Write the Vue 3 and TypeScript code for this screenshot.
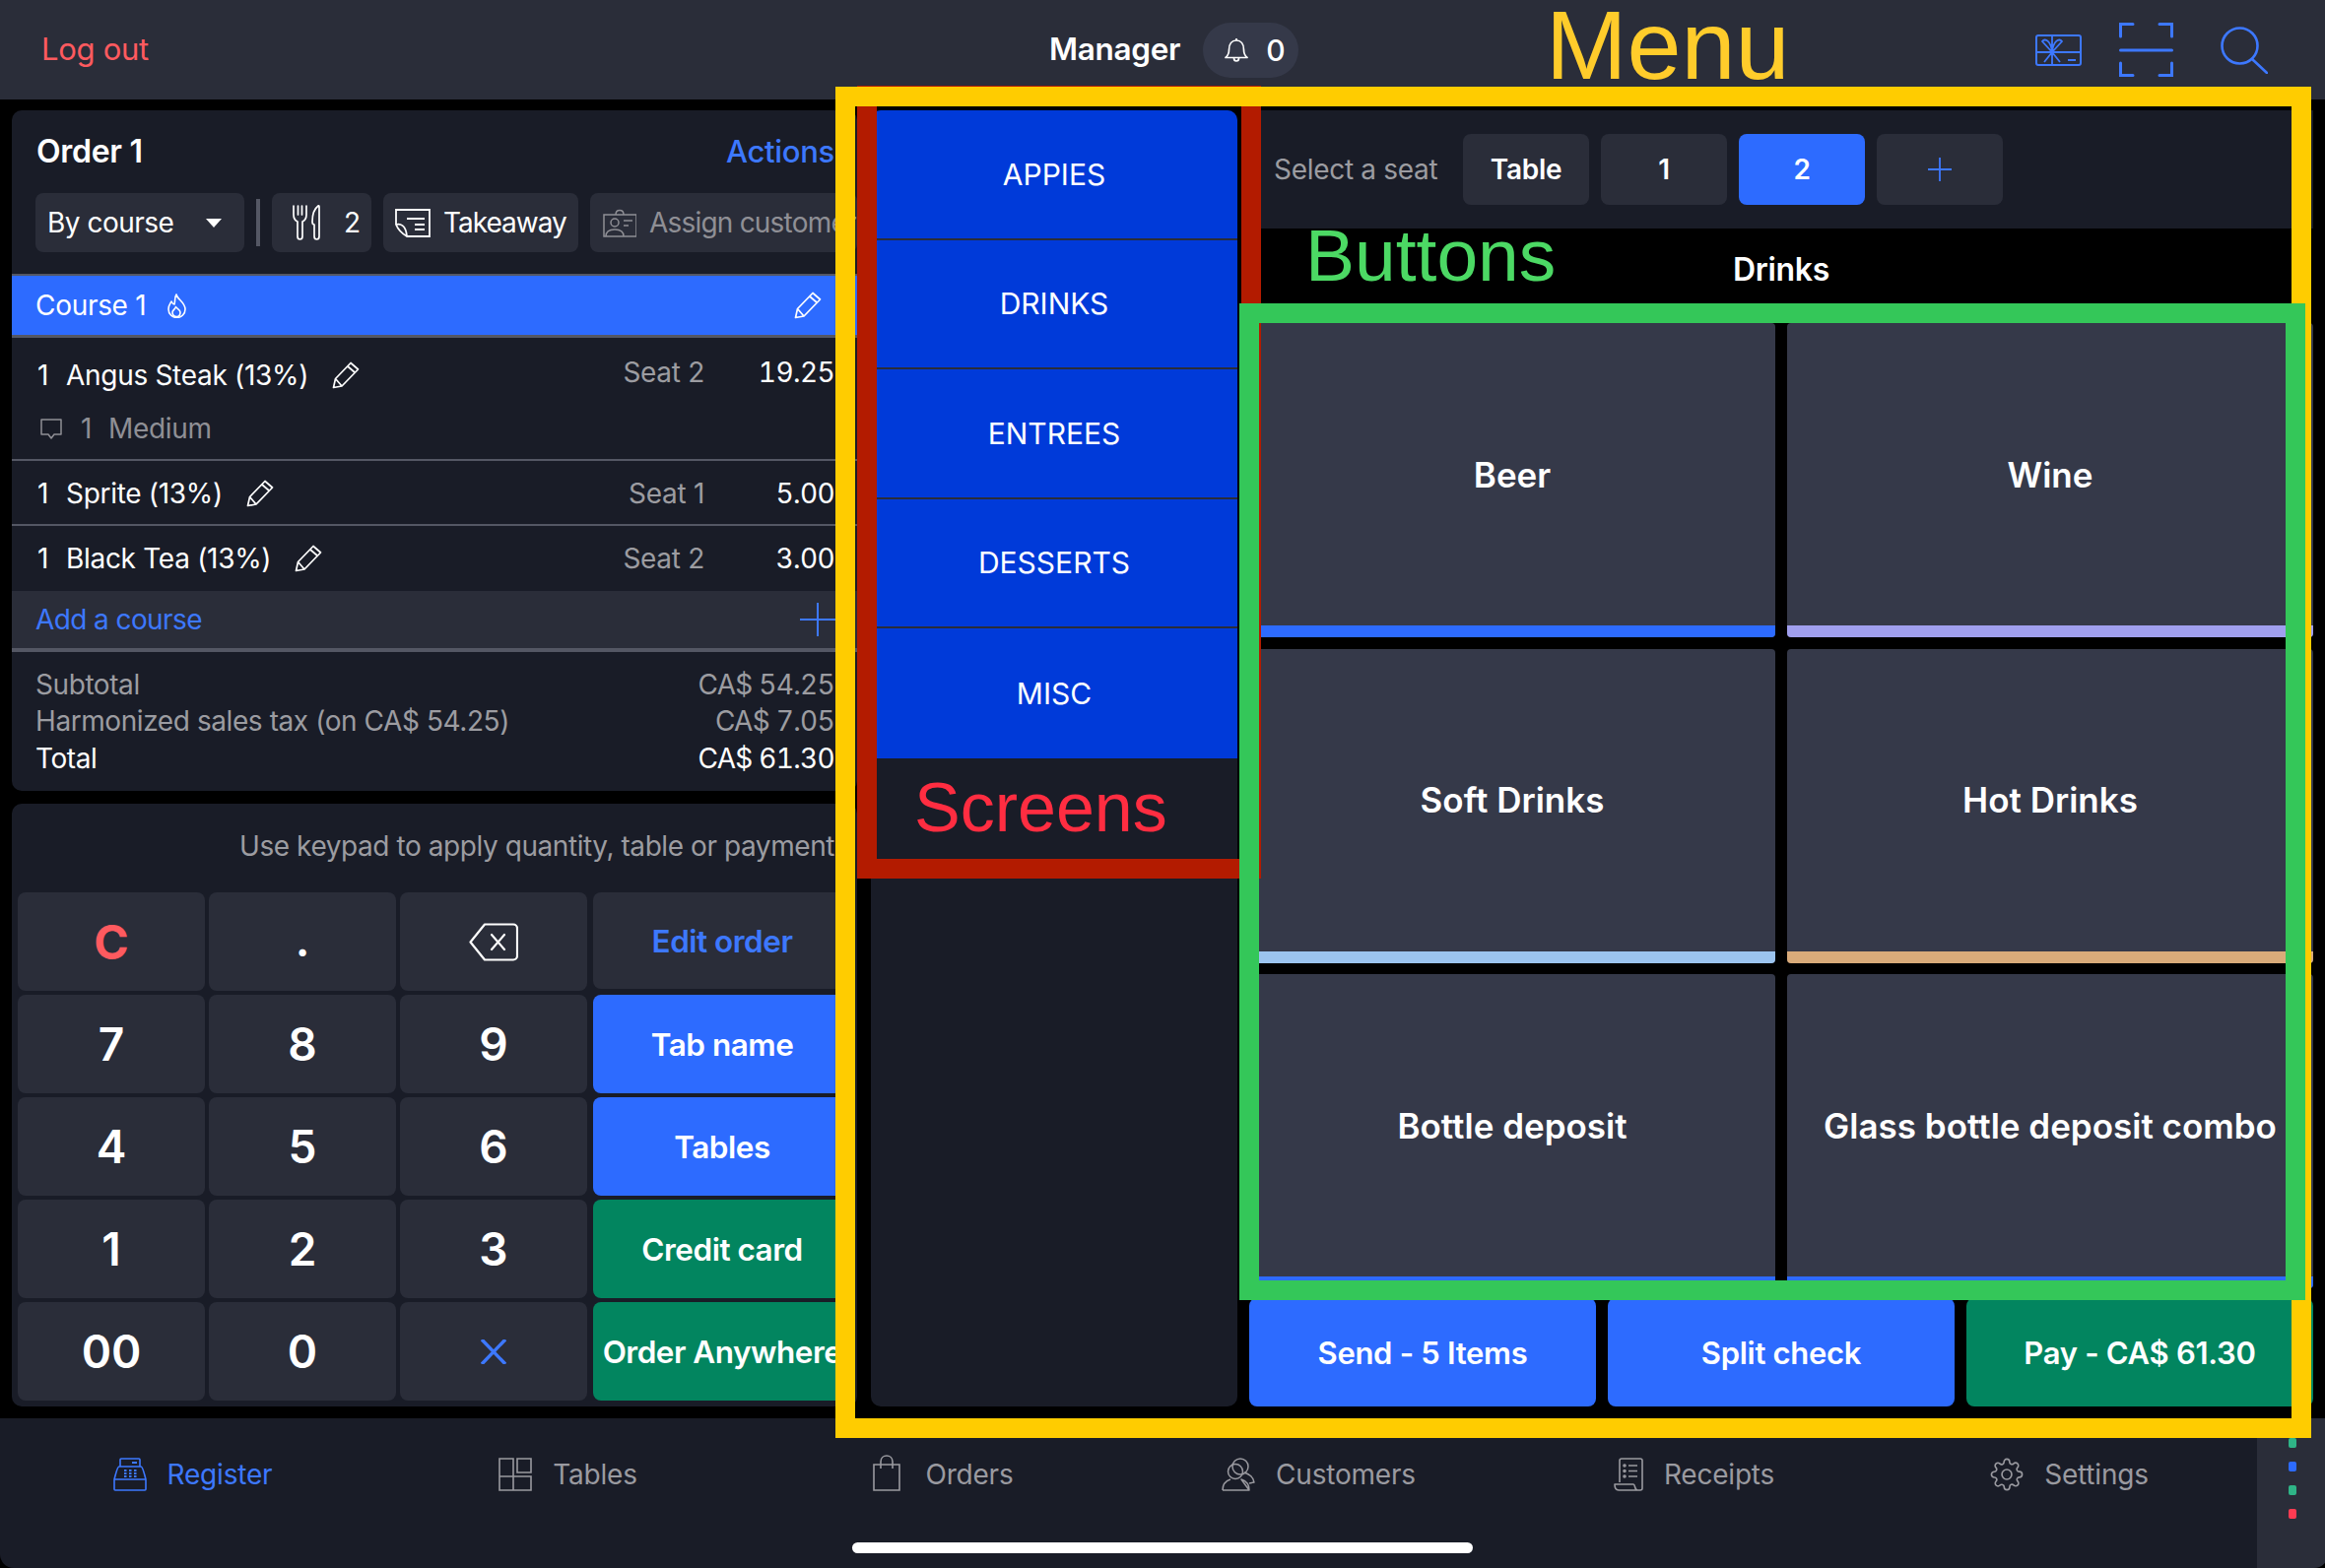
<script setup lang="ts">
interface OrderLine {
  name: string;
  seat: string;
  price: string;
  note?: string;
}

interface PadKey {
  label: string;
  kind?: string;
}

const orderLines: OrderLine[] = [
  { name: 'Angus Steak (13%)', seat: 'Seat 2', price: '19.25', note: 'Medium' },
  { name: 'Sprite (13%)', seat: 'Seat 1', price: '5.00' },
  { name: 'Black Tea (13%)', seat: 'Seat 2', price: '3.00' },
];

const totals = [
  { label: 'Subtotal', value: 'CA$ 54.25' },
  { label: 'Harmonized sales tax (on CA$ 54.25)', value: 'CA$ 7.05' },
  { label: 'Total', value: 'CA$ 61.30', strong: true },
];

const padKeys: PadKey[] = [
  { label: 'C', kind: 'clear' },
  { label: '.', kind: 'dot' },
  { label: '', kind: 'back' },
  { label: 'Edit order', kind: 'side ghost' },
  { label: '7' },
  { label: '8' },
  { label: '9' },
  { label: 'Tab name', kind: 'side blue' },
  { label: '4' },
  { label: '5' },
  { label: '6' },
  { label: 'Tables', kind: 'side blue' },
  { label: '1' },
  { label: '2' },
  { label: '3' },
  { label: 'Credit card', kind: 'side green' },
  { label: '00' },
  { label: '0' },
  { label: '', kind: 'times' },
  { label: 'Order Anywhere', kind: 'side green' },
];

const screens = ['APPIES', 'DRINKS', 'ENTREES', 'DESSERTS', 'MISC'];

const seats = [
  { label: 'Table' },
  { label: '1' },
  { label: '2', active: true },
];

const buttons = [
  { label: 'Beer', color: '#2d6bff' },
  { label: 'Wine', color: '#a09fee' },
  { label: 'Soft Drinks', color: '#9cc4ef' },
  { label: 'Hot Drinks', color: '#d9ab7a' },
  { label: 'Bottle deposit', color: '#2d6bff' },
  { label: 'Glass bottle deposit combo', color: '#2d6bff' },
];

const navItems = ['Register', 'Tables', 'Orders', 'Customers', 'Receipts', 'Settings'];

const statusDots = ['#2fb487', '#2d6bff', '#2fb487', '#ff3b52'];
</script>

<template>
  <div class="screen">
    <header class="topbar">
      <span class="logout">Log out</span>
      <div class="who">
        <span class="manager">Manager</span>
        <span class="bell-pill">
          <svg class="bell" viewBox="0 0 24 25" fill="none" stroke="#fff" stroke-width="1.7" stroke-linejoin="round">
            <path d="M1 20.500c2.500-2 3.500-4 3.500-8C4.500 6.500 7.500 3 12 3s7.500 3.500 7.500 9.500c0 4 1 6 3.500 8z" />
            <path d="M12 1v2M9.500 21c0 4 5 4 5 0" />
          </svg>
          0
        </span>
      </div>
      <div class="top-icons">
        <svg class="gift" viewBox="0 0 47 32" fill="none" stroke="#3d78ff" stroke-width="2">
          <rect x="1" y="1" width="45" height="30" rx="2" />
          <path d="M1 18h45M17 1v30M17 18L9 28M17 18l8 10M17 18L7 7c3-4 9 0 10 11zM17 18L27 7c-3-4-9 0-10 11zM33 26h8" stroke-width="1.800" />
        </svg>
        <svg class="scan" viewBox="0 0 55 55" fill="none" stroke="#3d78ff" stroke-width="3" stroke-linecap="round">
          <path d="M14 1.500H1.500V14M41 1.500h12.500V14M14 53.500H1.500V41M41 53.500h12.500V41M1.500 28h52" />
        </svg>
        <svg class="search" viewBox="0 0 48 48" fill="none" stroke="#3d78ff" stroke-width="2.600" stroke-linecap="round">
          <circle cx="19.500" cy="19.500" r="18" />
          <path d="M32 33l15 14" />
        </svg>
      </div>
    </header>

    <main class="body">
      <section class="left">
        <div class="order">
          <div class="order-head">
            <span class="order-title">Order 1</span>
            <span class="actions">Actions</span>
          </div>
          <div class="toolbar">
            <div class="chip by-course">
              <span>By course</span>
              <i class="caret"></i>
            </div>
            <i class="tool-sep"></i>
            <div class="chip covers">
              <svg class="fork" viewBox="0 0 30 36" fill="none" stroke="#fff" stroke-width="1.700" stroke-linecap="round" stroke-linejoin="round">
                <path d="M1 1v9c0 4 2 6 4 7v15c0 4 5 4 5 0V17c2-1 4-3 4-7V1M5.500 1v9M9.500 1v9" />
                <path d="M26 1c-4 3-6 9-6 16 0 2 1 3 2 3v12c0 4 5 4 5 0V2c0-1-.5-1.500-1-1z" />
              </svg>
              <span>2</span>
            </div>
            <div class="chip takeaway">
              <svg class="bill" viewBox="0 0 36 29" fill="none" stroke="#fff" stroke-width="1.800">
                <path d="M1 1h34v27H12C7 25 3 21 1 16zM1 16c4-1 10 0 11 12" />
                <path d="M12 10h18M20 16h10M20 21h10" stroke-width="2" />
              </svg>
              <span>Takeaway</span>
            </div>
            <div class="chip assign">
              <svg class="badge" viewBox="0 0 34 29" fill="none" stroke="#8f8f95" stroke-width="1.500">
                <path d="M1 6h33v22H1zM13 6c0-6 8-6 8 0" />
                <circle cx="12" cy="14" r="4" />
                <path d="M3 28c0-6 4-7 9-7s9 1 9 7M21 12h9M21 17h5" />
              </svg>
              <span>Assign customer</span>
            </div>
          </div>

          <div class="course-bar">
            <span>Course 1</span>
            <svg class="flame" viewBox="0 0 21 25" fill="none" stroke="#fff" stroke-width="1.600" stroke-linejoin="round">
              <path d="M10 1c1 5 9 8 9 15a8.500 8.500 0 0 1-17 0c0-4 2-6 3-8 1 2 2 3 3 3 1-3 0-7 2-10z" />
              <path d="M10.500 23.500c-3 0-4.500-2-4.500-4.500 0-2 3-3 3.500-5.500 1 2 4.500 3 4.500 5.500 0 2.500-1 4.500-3.500 4.500z" />
            </svg>
            <svg class="pencil course-pencil" viewBox="0 0 28 28" fill="none" stroke="#fff" stroke-width="1.700" stroke-linejoin="round">
              <path d="M1.500 26.500l2-9L19 1.500 26.500 8 10 25zM3.500 17.500l6.500 7.500M16 5l7.500 6.500" />
            </svg>
          </div>

          <div
            v-for="(line, i) in orderLines"
            :key="line.name"
            class="line"
            :class="{ 'line--note': line.note, 'line--last': i === orderLines.length - 1 }"
          >
            <div class="line-main">
              <span class="qty">1</span>
              <span class="name">{{ line.name }}</span>
              <svg class="pencil" viewBox="0 0 28 28" fill="none" stroke="#fff" stroke-width="1.700" stroke-linejoin="round">
                <path d="M1.500 26.500l2-9L19 1.500 26.500 8 10 25zM3.500 17.500l6.500 7.500M16 5l7.500 6.500" />
              </svg>
              <span class="seat">{{ line.seat }}</span>
              <span class="price">{{ line.price }}</span>
            </div>
            <div v-if="line.note" class="line-note">
              <svg class="comment" viewBox="0 0 22 21" fill="none" stroke="#8f8f95" stroke-width="1.500" stroke-linejoin="round">
                <path d="M1 1h20v15h-7l-3 4-3-4H1z" />
              </svg>
              <span class="note-qty">1</span>
              <span>{{ line.note }}</span>
            </div>
          </div>

          <div class="add-course">
            <span>Add a course</span>
            <svg class="add-plus" viewBox="0 0 36 34" stroke="#3d78ff" stroke-width="2">
              <path d="M18 0v34M0 17h36" />
            </svg>
          </div>

          <div class="totals">
            <div v-for="row in totals" :key="row.label" class="total-row" :class="{ strong: row.strong }">
              <span>{{ row.label }}</span>
              <span class="total-value">{{ row.value }}</span>
            </div>
          </div>
        </div>

        <div class="keypad">
          <p class="hint">Use keypad to apply quantity, table or payment</p>
          <div class="keys">
            <button v-for="(key, i) in padKeys" :key="i" class="key" :class="key.kind">
              <svg v-if="key.kind === 'back'" class="back-icon" viewBox="0 0 50 39" fill="none" stroke="#fff" stroke-width="2.200" stroke-linejoin="round">
                <path d="M16 1.500h29a4 4 0 0 1 4 4v28a4 4 0 0 1-4 4H16L1.500 19.500z" />
                <path d="M23 12l13 15M36 12L23 27" stroke-linecap="round" />
              </svg>
              <svg v-else-if="key.kind === 'times'" class="times-icon" viewBox="0 0 26 25" fill="none" stroke="#3d78ff" stroke-width="3.400">
                <path d="M1 0l24 25M25 0L1 25" />
              </svg>
              <template v-else>{{ key.label }}</template>
            </button>
          </div>
        </div>
      </section>

      <aside class="screens">
        <button v-for="name in screens" :key="name" class="screen-btn">{{ name }}</button>
      </aside>

      <section class="menu">
        <div class="seatbar">
          <span class="seat-label">Select a seat</span>
          <button v-for="s in seats" :key="s.label" class="seat-chip" :class="{ active: s.active }">{{ s.label }}</button>
          <button class="seat-chip">
            <svg class="seat-plus" viewBox="0 0 24 24" stroke="#3d78ff" stroke-width="1.800">
              <path d="M12 0v24M0 12h24" />
            </svg>
          </button>
        </div>
        <div class="menu-title">Drinks</div>
        <div class="grid">
          <button v-for="b in buttons" :key="b.label" class="grid-btn">
            <span class="grid-label">{{ b.label }}</span>
            <i class="grid-strip" :style="{ background: b.color }"></i>
          </button>
        </div>
        <div class="action-row">
          <button class="action blue">Send - 5 Items</button>
          <button class="action blue">Split check</button>
          <button class="action green">Pay - CA$ 61.30</button>
        </div>
      </section>
    </main>

    <footer class="footer">
      <nav class="nav">
        <div v-for="(item, i) in navItems" :key="item" class="nav-item" :class="{ current: i === 0 }">
          <svg v-if="i === 0" class="nav-icon" viewBox="0 0 34 34" fill="none" stroke="currentColor" stroke-width="1.600" stroke-linejoin="round">
            <path d="M7 9V2a1 1 0 0 1 1-1h18a1 1 0 0 1 1 1v7M6 9h22c2 0 3 6 5 13H1C3 15 4 9 6 9zM1 22h32v10a1 1 0 0 1-1 1H2a1 1 0 0 1-1-1z" />
            <path d="M19 5h5M11 13h2.500M16 13h2.500M21 13h2.500M11 16h2.500M16 16h2.500M21 16h2.500M11 19h2.500M16 19h2.500M21 19h2.500" stroke-width="1.800" />
          </svg>
          <svg v-else-if="i === 1" class="nav-icon" viewBox="0 0 34 34" fill="none" stroke="currentColor" stroke-width="1.600">
            <path d="M1 1h14v32H1zM1 19h32v14H15M19 1h14v14H19z" />
          </svg>
          <svg v-else-if="i === 2" class="nav-icon bag" viewBox="0 0 28 37" fill="none" stroke="currentColor" stroke-width="1.600">
            <path d="M1 10h26v26H1zM8 14V7c0-8 12-8 12 0v7" />
          </svg>
          <svg v-else-if="i === 3" class="nav-icon" viewBox="0 0 34 34" fill="none" stroke="currentColor" stroke-width="1.500" stroke-linejoin="round">
            <circle cx="19" cy="9" r="8" />
            <circle cx="14" cy="14" r="7.500" />
            <path d="M1 33c0-5 2-9 8-11M20 22c6 2 8 6 8 11zM1 33h27M23 15c5 2 9 4 10 10l-5 1" />
          </svg>
          <svg v-else-if="i === 4" class="nav-icon receipt" viewBox="0 0 30 34" fill="none" stroke="currentColor" stroke-width="1.600" stroke-linejoin="round">
            <path d="M6 25V3a2 2 0 0 1 2-2h19a2 2 0 0 1 2 2v28a2 2 0 0 1-2 2h-3c-3 0-2-6-4-6H1c0 3 1 6 4 6h19" />
            <circle cx="11" cy="8" r="1" />
            <circle cx="11" cy="13.500" r="1" />
            <circle cx="11" cy="19" r="1" />
            <path d="M15 8h9M15 13.500h9M15 19h9" />
          </svg>
          <svg v-else class="nav-icon" viewBox="0 0 24 24" fill="none" stroke="currentColor" stroke-width="1.150">
            <circle cx="12" cy="12" r="3.500" />
            <path d="M19.400 15a1.650 1.650 0 0 0 .33 1.820l.06.06a2 2 0 0 1 0 2.830 2 2 0 0 1-2.830 0l-.06-.06a1.650 1.650 0 0 0-1.820-.33 1.650 1.650 0 0 0-1 1.510V21a2 2 0 0 1-2 2 2 2 0 0 1-2-2v-.09A1.650 1.650 0 0 0 9 19.400a1.650 1.650 0 0 0-1.820.33l-.06.06a2 2 0 0 1-2.830 0 2 2 0 0 1 0-2.830l.06-.06a1.650 1.650 0 0 0 .33-1.820 1.650 1.650 0 0 0-1.510-1H3a2 2 0 0 1-2-2 2 2 0 0 1 2-2h.09A1.650 1.650 0 0 0 4.600 9a1.650 1.650 0 0 0-.33-1.820l-.06-.06a2 2 0 0 1 0-2.830 2 2 0 0 1 2.830 0l.06.06a1.650 1.650 0 0 0 1.820.33H9a1.650 1.650 0 0 0 1-1.510V3a2 2 0 0 1 2-2 2 2 0 0 1 2 2v.09a1.650 1.650 0 0 0 1 1.510 1.650 1.650 0 0 0 1.820-.33l.06-.06a2 2 0 0 1 2.830 0 2 2 0 0 1 0 2.830l-.06.06a1.650 1.650 0 0 0-.33 1.820V9a1.650 1.650 0 0 0 1.510 1H21a2 2 0 0 1 2 2 2 2 0 0 1-2 2h-.09a1.650 1.650 0 0 0-1.510 1z" />
          </svg>
          <span>{{ item }}</span>
        </div>
      </nav>
      <div class="status-strip">
        <i v-for="(c, i) in statusDots" :key="i" class="status-dot" :style="{ background: c }"></i>
      </div>
      <i class="home-bar"></i>
    </footer>

    <!-- hand-drawn annotation boxes that lie over the screenshot -->
    <div class="anno anno-red"></div>
    <div class="anno anno-yellow"></div>
    <div class="anno anno-green"></div>
    <span class="anno-label label-menu">Menu</span>
    <span class="anno-label label-buttons">Buttons</span>
    <span class="anno-label label-screens">Screens</span>
  </div>
</template>

<style>
html,
body {
  margin: 0;
  background: #000;
}
</style>

<style scoped>
.screen {
  position: relative;
  width: 2360px;
  height: 1592px;
  overflow: hidden;
  display: flex;
  flex-direction: column;
  background: #000;
  color: #fff;
  font-family: Inter, "Noto Sans", sans-serif;
  letter-spacing: -0.3px;
}
button {
  border: 0;
  padding: 0;
  color: inherit;
  font: inherit;
  letter-spacing: inherit;
}
i {
  display: block;
}
svg {
  display: block;
  flex: none;
}

/* top bar */
.topbar {
  height: 101px;
  flex: none;
  background: #2a2d39;
  display: grid;
  grid-template-columns: 1065px auto 1fr;
  align-items: center;
}
.logout {
  padding-left: 42px;
  margin-bottom: 2px;
  color: #ff5a5f;
  font-size: 31px;
}
.who {
  display: flex;
  align-items: center;
  gap: 23px;
}
.manager {
  margin-bottom: 2px;
  font-size: 31.500px;
  font-weight: 600;
}
.bell-pill {
  width: 97px;
  height: 56px;
  box-sizing: border-box;
  padding-left: 22px;
  border-radius: 28px;
  background: #353949;
  display: flex;
  align-items: center;
  gap: 18px;
  font-size: 30px;
  font-weight: 500;
}
.bell {
  width: 24px;
  height: 25px;
}
.top-icons {
  display: flex;
  justify-content: flex-end;
  align-items: center;
  padding-right: 58px;
}
.gift {
  width: 47px;
  height: 32px;
}
.scan {
  width: 55px;
  height: 55px;
  margin-left: 38px;
}
.search {
  width: 48px;
  height: 48px;
  margin-left: 48px;
}

/* main columns */
.body {
  flex: 1;
  min-height: 0;
  display: flex;
  padding: 11px 12px 0;
}
.left {
  width: 858px;
  flex: none;
  display: flex;
  flex-direction: column;
  gap: 13px;
}

/* order panel */
.order {
  height: 691px;
  flex: none;
  background: #191c27;
  border-radius: 10px;
  overflow: hidden;
}
.order-head {
  height: 84px;
  box-sizing: border-box;
  padding: 0 23px 2px 25px;
  display: flex;
  justify-content: space-between;
  align-items: center;
}
.order-title {
  font-size: 32px;
  font-weight: 600;
}
.actions {
  color: #3d78ff;
  font-size: 31px;
  font-weight: 500;
}
.toolbar {
  height: 60px;
  padding-left: 24px;
  display: flex;
  align-items: center;
  gap: 12px;
  white-space: nowrap;
  margin-bottom: 22px;
}
.chip {
  height: 60px;
  box-sizing: border-box;
  display: flex;
  align-items: center;
  border-radius: 8px;
  background: #2a2d39;
  font-size: 28px;
}
.by-course {
  width: 212px;
  padding-left: 12px;
  letter-spacing: -0.5px;
}
.caret {
  margin-left: 33px;
  border-top: 9px solid #fff;
  border-left: 8px solid transparent;
  border-right: 8px solid transparent;
}
.tool-sep {
  width: 4px;
  height: 48px;
  background: #545764;
}
.covers {
  width: 101px;
  padding-left: 21px;
  gap: 22px;
}
.fork {
  width: 30px;
  height: 36px;
}
.takeaway {
  width: 198px;
  padding-left: 12px;
  gap: 13px;
  letter-spacing: -1px;
}
.bill {
  width: 36px;
  height: 29px;
}
.assign {
  width: 271px;
  flex: none;
  padding-left: 13px;
  gap: 13px;
  color: #8f8f95;
  letter-spacing: -0.8px;
}
.badge {
  width: 34px;
  height: 29px;
}

.course-bar {
  height: 60px;
  border-top: 2px solid #545764;
  border-bottom: 3px solid #545764;
  padding: 0 36px 0 24px;
  background: #2d6bff;
  display: flex;
  align-items: center;
  font-size: 28px;
}
.flame {
  width: 21px;
  height: 25px;
  margin-left: 21px;
}
.pencil {
  width: 28px;
  height: 28px;
}
.course-pencil {
  margin-left: auto;
}

.line {
  box-sizing: border-box;
  height: 66px;
  padding: 1px 23px 0 26px;
  border-bottom: 2px solid #545764;
  font-size: 28px;
}
.line--note {
  height: 125px;
  padding-top: 6px;
}
.line--last {
  border-bottom: 0;
}
.line-main {
  height: 64px;
  display: flex;
  align-items: center;
}
.qty {
  width: 29px;
}
.name + .pencil {
  margin-left: 24px;
}
.seat {
  margin-left: auto;
  color: #9c9ca1;
}
.line--note .seat,
.line--note .price {
  margin-bottom: 6px;
}
.price {
  width: 132px;
  text-align: right;
  letter-spacing: -0.6px;
  font-variant-numeric: tabular-nums;
}
.line-note {
  display: flex;
  align-items: center;
  padding-left: 3px;
  margin-top: 5px;
  color: #8f8f95;
}
.comment {
  width: 22px;
  height: 21px;
}
.note-qty {
  margin-left: 19px;
  width: 28px;
}

.add-course {
  height: 58px;
  padding: 0 22px 0 24px;
  background: #2a2d39;
  border-bottom: 4px solid #545764;
  display: flex;
  justify-content: space-between;
  align-items: center;
  color: #3d78ff;
  font-size: 28px;
  letter-spacing: -0.6px;
}
.add-plus {
  width: 36px;
  height: 34px;
}
.totals {
  padding: 14px 23px 0 24px;
  font-size: 28px;
  color: #9c9ca1;
  letter-spacing: -0.42px;
}
.total-row {
  height: 37.500px;
  display: flex;
  justify-content: space-between;
  align-items: center;
}
.total-value {
  letter-spacing: -0.7px;
  font-variant-numeric: tabular-nums;
}
.total-row.strong {
  color: #fff;
}

/* keypad */
.keypad {
  flex: none;
  height: 612px;
  box-sizing: border-box;
  padding-left: 6px;
  background: #191c27;
  border-radius: 10px;
  overflow: hidden;
}
.hint {
  height: 90px;
  margin: 0;
  padding: 26px 23px 0 0;
  box-sizing: border-box;
  text-align: right;
  color: #9c9ca1;
  font-size: 28px;
  line-height: 34px;
  white-space: nowrap;
  letter-spacing: -0.43px;
}
.keys {
  display: grid;
  grid-template-columns: 190px 190px 190px 264px;
  grid-auto-rows: 100px;
  gap: 4px;
}
.key {
  border-radius: 8px;
  background: #2a2d39;
  display: flex;
  justify-content: center;
  align-items: center;
  font-size: 46px;
  font-weight: 600;
  letter-spacing: 0;
}
.key.clear {
  color: #ff5a5f;
  font-weight: 700;
  font-size: 48px;
}
.key.dot {
  padding-bottom: 4px;
}
.key.side {
  margin-left: 2px;
  font-size: 31.500px;
  font-weight: 580;
  letter-spacing: -0.5px;
  white-space: nowrap;
}
.key.ghost {
  color: #3d78ff;
  height: 98px;
}
.key.blue {
  background: #2d6bff;
}
.key.green {
  background: #02855f;
}
.back-icon {
  width: 50px;
  height: 39px;
}
.times-icon {
  width: 26px;
  height: 25px;
}

/* screens column */
.screens {
  width: 372px;
  flex: none;
  margin-left: 14px;
  margin-bottom: 12px;
  background: #191c27;
  border-radius: 10px;
  overflow: hidden;
  display: flex;
  flex-direction: column;
}
.screen-btn {
  height: 131.500px;
  flex: none;
  box-sizing: border-box;
  background: #003ad9;
  border-bottom: 2px solid #2a2d39;
  font-size: 30px;
  letter-spacing: 0;
}
.screen-btn:last-child {
  border-bottom: 0;
}

/* right side */
.menu {
  width: 1080px;
  flex: none;
  margin-left: 12px;
  display: flex;
  flex-direction: column;
}
.seatbar {
  height: 120px;
  flex: none;
  box-sizing: border-box;
  padding-left: 25px;
  background: #191c27;
  display: flex;
  align-items: center;
  gap: 12px;
}
.seat-label {
  width: 180px;
  color: #9c9ca1;
  font-size: 28px;
}
.seat-chip {
  width: 128px;
  height: 72px;
  border-radius: 8px;
  background: #2a2d39;
  font-size: 28px;
  font-weight: 600;
  display: flex;
  justify-content: center;
  align-items: center;
}
.seat-chip.active {
  background: #2d6bff;
}
.seat-plus {
  width: 24px;
  height: 24px;
}
.menu-title {
  height: 96px;
  flex: none;
  padding-top: 22px;
  box-sizing: border-box;
  text-align: center;
  font-size: 32px;
  font-weight: 600;
}
.grid {
  display: grid;
  grid-template-columns: 534px 534px;
  grid-auto-rows: 319px;
  gap: 11.500px 12px;
}
.grid-btn {
  background: #353949;
  border-radius: 4px;
  overflow: hidden;
  display: flex;
  flex-direction: column;
}
.grid-label {
  flex: 1;
  display: flex;
  justify-content: center;
  align-items: center;
  font-size: 35px;
  font-weight: 600;
  letter-spacing: 0;
}
.grid-strip {
  width: 100%;
  height: 12px;
  flex: none;
}
.action-row {
  margin-top: 10px;
  height: 110px;
  display: grid;
  grid-template-columns: repeat(3, 352px);
  gap: 12px;
}
.action {
  border-radius: 8px;
  font-size: 31px;
  font-weight: 600;
}
.action.blue {
  background: #2d6bff;
}
.action.green {
  background: #02855f;
}

/* bottom nav */
.footer {
  position: relative;
  height: 152px;
  flex: none;
  display: flex;
}
.nav {
  flex: 1;
  padding-left: 5px;
  background: #191c27;
  border-bottom-left-radius: 14px;
  display: grid;
  grid-template-columns: repeat(6, 381px);
}
.nav-item {
  height: 114px;
  display: flex;
  justify-content: center;
  align-items: center;
  gap: 21px;
  color: #9a9aa0;
  font-size: 28px;
  letter-spacing: -0.2px;
}
.nav-item.current {
  color: #3d78ff;
}
.nav-icon {
  width: 34px;
  height: 34px;
}
.nav-icon.bag {
  width: 28px;
  height: 37px;
  margin-top: -3px;
  margin-right: 4px;
}
.nav-icon.receipt {
  width: 30px;
}
.status-strip {
  width: 72px;
  flex: none;
  background: #2a2d39;
  border-bottom-right-radius: 14px;
  padding: 20px 0 0 32px;
  box-sizing: border-box;
}
.status-dot {
  width: 8px;
  height: 10px;
  margin-bottom: 14px;
  border-radius: 2px;
}
.home-bar {
  position: absolute;
  left: 865px;
  top: 126px;
  width: 630px;
  height: 11px;
  border-radius: 6px;
  background: #fff;
}

/* annotations */
.anno {
  position: absolute;
  box-sizing: border-box;
  border-style: solid;
  border-width: 20px;
  pointer-events: none;
}
.anno-red {
  left: 870px;
  top: 87px;
  width: 410px;
  height: 805px;
  border-color: #b31b00;
}
.anno-yellow {
  left: 848px;
  top: 88px;
  width: 1498px;
  height: 1372px;
  border-color: #ffcc00;
}
.anno-green {
  left: 1258px;
  top: 308px;
  width: 1082px;
  height: 1012px;
  border-color: #34c759;
}
.anno-label {
  position: absolute;
  font-family: "Liberation Sans", Arial, sans-serif;
  letter-spacing: 0;
  white-space: nowrap;
}
.label-menu {
  left: 1569px;
  top: 6px;
  font-size: 99px;
  line-height: 80px;
  color: #ffcc2b;
}
.label-buttons {
  left: 1325px;
  top: 222px;
  font-size: 75px;
  line-height: 1;
  color: #4cd964;
}
.label-screens {
  left: 928px;
  top: 785px;
  font-size: 70px;
  line-height: 1;
  color: #ff2d41;
}
</style>
